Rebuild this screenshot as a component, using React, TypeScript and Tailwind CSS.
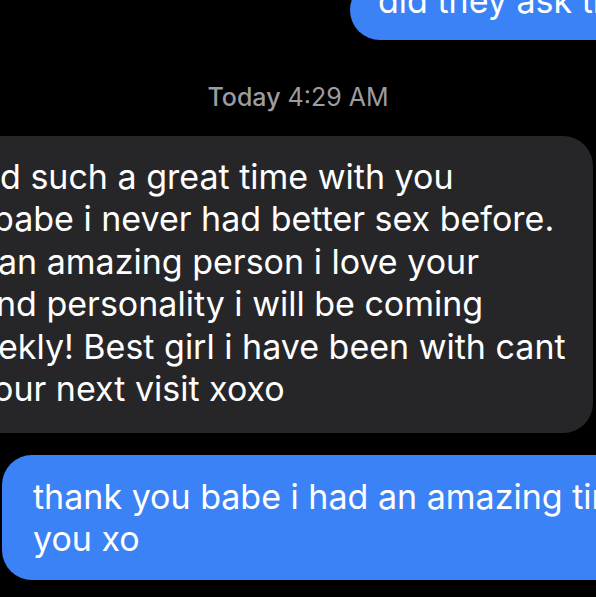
export default function App() {
  const incoming = [
    { text: "d such a great time with you", ml: "ml-[0px]" },
    { text: "babe i never had better sex before.", ml: "ml-[-7px]" },
    { text: "an amazing person i love your", ml: "ml-[-2px]" },
    { text: "nd personality i will be coming", ml: "ml-[-4px]" },
    { text: "ekly! Best girl i have been with cant", ml: "ml-[-2px]" },
    { text: "our next visit xoxo", ml: "ml-[-7px]" },
  ];

  return (
    <div className="w-[596px] h-[597px] bg-black overflow-hidden font-['Inter',sans-serif] text-[34px] leading-[42.5px] text-white">
      {/* previous outgoing message, cut off at top */}
      <div className="ml-[350px] mt-[-20px] w-[320px] rounded-[30px] bg-[#3b82f6] pl-[28px] pb-[17px] whitespace-nowrap">
        did they ask the
      </div>

      {/* timestamp */}
      <div className="mt-[42px] text-center text-[25px] leading-[30px] text-[#9c9ca1]">
        <span className="font-medium">Today</span> 4:29 AM
      </div>

      {/* incoming message */}
      <div className="mt-[24px] ml-[-40px] w-[633px] rounded-[30px] bg-[#262628] pl-[40px] pt-[20px] pb-[22px] whitespace-nowrap">
        {incoming.map((l) => (
          <div key={l.text} className={l.ml}>
            {l.text}
          </div>
        ))}
      </div>

      {/* outgoing reply */}
      <div className="mt-[22px] ml-[2px] w-[640px] rounded-[30px] bg-[#3b82f6] pl-[31px] pt-[21px] pb-[19px] whitespace-nowrap">
        <div>thank you babe i had an amazing time with</div>
        <div>you xo</div>
      </div>
    </div>
  );
}
